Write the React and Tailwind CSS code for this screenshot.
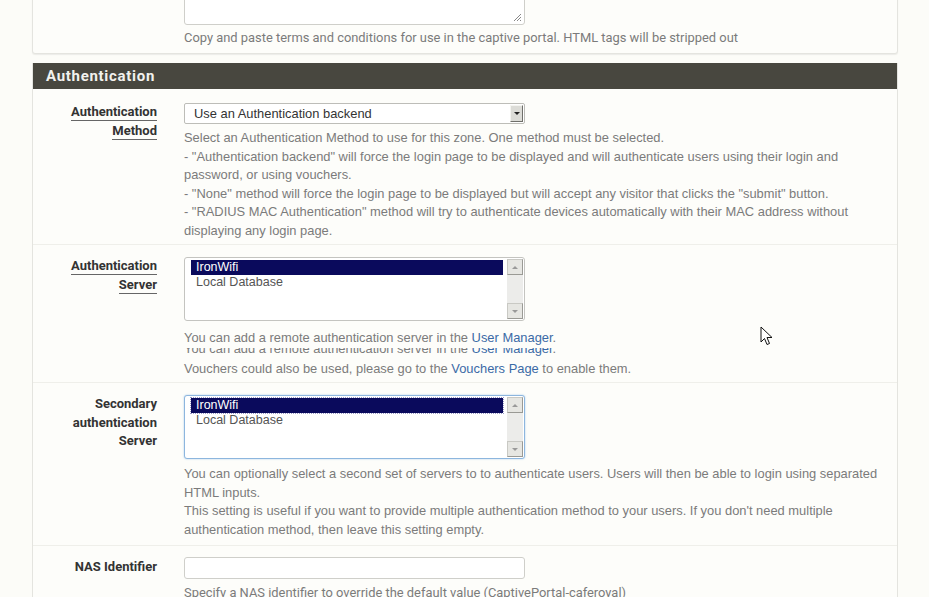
import React from 'react';

const narrow = { fontFamily: '"Liberation Sans Narrow", Roboto, "Liberation Sans", sans-serif' };

function Label({ lines, underline }) {
  return (
    <div className="w-[124px] shrink-0 text-right font-bold text-[13px] leading-[18.5px] text-[#333]" style={narrow}>
      {lines.map((l) => (
        <div key={l}>
          <span className={underline ? 'border-b border-[#666] pb-[1px]' : ''}>{l}</span>
        </div>
      ))}
    </div>
  );
}

function Help({ children, className = '' }) {
  return (
    <div className={'text-[12.9px] leading-[18.5px] text-[#7b7b7b] whitespace-nowrap ' + className}>
      {children}
    </div>
  );
}

function Listbox({ focused }) {
  return (
    <div
      className={
        'w-[341px] h-[64px] bg-white rounded-[3px] border flex ' +
        (focused ? 'border-[#8db6de] shadow-[0_0_2px_#a9cbea]' : 'border-[#c4c4c0]')
      }
    >
      <div className="flex-1 pl-[6px] pt-[2px] text-[12.5px] leading-[15px]">
        <div
          className={
            'bg-[#0a0a5c] text-white pl-[5px] h-[15px] ' +
            (focused ? 'outline outline-1 outline-dotted outline-[#9a9ac8]' : '')
          }
        >
          IronWifi
        </div>
        <div className="text-[#555] pl-[5px]">Local Database</div>
      </div>
      <div className="w-[16px] ml-[4px] mr-[1px] my-[1px] bg-[#ececea] flex flex-col justify-between">
        <div className="h-[16px] bg-[#e6e6e2] border border-[#c9c9c4] border-r-[#9a9a95] border-b-[#9a9a95] flex items-center justify-center">
          <div className="w-0 h-0 border-l-[3px] border-r-[3px] border-b-[3px] border-l-transparent border-r-transparent border-b-[#999]" />
        </div>
        <div className="h-[16px] bg-[#e6e6e2] border border-[#c9c9c4] border-r-[#9a9a95] border-b-[#9a9a95] flex items-center justify-center">
          <div className="w-0 h-0 border-l-[3px] border-r-[3px] border-t-[3px] border-l-transparent border-r-transparent border-t-[#999]" />
        </div>
      </div>
    </div>
  );
}

function Link({ children }) {
  return <span className="text-[#3b6aa6]">{children}</span>;
}

export default function App() {
  return (
    <div
      className="relative w-[929px] h-[597px] overflow-hidden bg-[#fcfcf8]"
      style={{ fontFamily: '"Liberation Sans", Arial, sans-serif' }}
    >
      {/* previous panel, cut off at the top */}
      <div className="ml-[32px] w-[866px] -mt-[30px] bg-[#fdfdfa] border border-[#e4e4df] rounded-b-[3px] shadow-[0_1px_1px_#ecece8]">
        <div className="flex">
          <div className="w-[124px] shrink-0" />
          <div className="ml-[27px] pt-[4px] pb-[6px]">
            <div className="relative w-[341px] h-[50px] bg-white border border-[#cfcfca] rounded-[3px]">
              <svg className="absolute right-[2px] bottom-[2px]" width="10" height="10" viewBox="0 0 10 10">
                <path d="M9 2 L2 9 M9 5 L5 9 M9 8 L8 9" stroke="#888" strokeWidth="1" />
              </svg>
            </div>
            <div className="mt-[4px] text-[12.9px] leading-[18px] text-[#7b7b7b]" style={narrow}>
              Copy and paste terms and conditions for use in the captive portal. HTML tags will be stripped out
            </div>
          </div>
        </div>
      </div>

      {/* Authentication panel */}
      <div className="ml-[32px] w-[866px] mt-[9px] bg-[#fdfdfa] border border-[#e4e4df] border-t-0">
        <div
          className="h-[26px] bg-[#48473f] text-[#f2f2ee] font-bold text-[15px] tracking-[0.7px] pl-[13px] flex items-center"
          style={narrow}
        >
          Authentication
        </div>

        {/* Authentication Method */}
        <div className="flex pt-[14px] pb-[4px] border-b border-[#efefea]">
          <Label lines={['Authentication', 'Method']} underline />
          <div className="ml-[27px]">
            <div className="w-[341px] h-[21px] bg-white border border-[#bdbdb8] rounded-[2px] flex items-center justify-between pl-[9px] pr-[1px]">
              <span className="text-[12.9px] text-[#333]">Use an Authentication backend</span>
              <div className="w-[13px] h-[17px] bg-[#dcdcd7] border border-[#f4f4f0] border-r-[#6f6f6a] border-b-[#6f6f6a] flex items-center justify-center">
                <div className="w-0 h-0 border-l-[3px] border-r-[3px] border-t-[3px] border-l-transparent border-r-transparent border-t-[#222]" />
              </div>
            </div>
            <Help className="mt-[5px]">
              <div>Select an Authentication Method to use for this zone. One method must be selected.</div>
              <div>- "Authentication backend" will force the login page to be displayed and will authenticate users using their login and</div>
              <div>password, or using vouchers.</div>
              <div>- "None" method will force the login page to be displayed but will accept any visitor that clicks the "submit" button.</div>
              <div>- "RADIUS MAC Authentication" method will try to authenticate devices automatically with their MAC address without</div>
              <div>displaying any login page.</div>
            </Help>
          </div>
        </div>

        {/* Authentication Server */}
        <div className="flex pt-[12px] pb-[4px] border-b border-[#efefea]">
          <Label lines={['Authentication', 'Server']} underline />
          <div className="ml-[27px]">
            <Listbox />
            <Help className="mt-[8px]">
              <div>
                You can add a remote authentication server in the <Link>User Manager</Link>.
              </div>
              <div className="h-[12px] overflow-hidden">
                <div className="-mt-[8px]">
                  You can add a remote authentication server in the <Link>User Manager</Link>.
                </div>
              </div>
              <div>
                Vouchers could also be used, please go to the <Link>Vouchers Page</Link> to enable them.
              </div>
            </Help>
          </div>
        </div>

        {/* Secondary authentication Server */}
        <div className="flex pt-[12px] pb-[6px] border-b border-[#efefea]">
          <Label lines={['Secondary', 'authentication', 'Server']} />
          <div className="ml-[27px]">
            <Listbox focused />
            <Help className="mt-[6px]">
              <div>You can optionally select a second set of servers to to authenticate users. Users will then be able to login using separated</div>
              <div>HTML inputs.</div>
              <div>This setting is useful if you want to provide multiple authentication method to your users. If you don't need multiple</div>
              <div>authentication method, then leave this setting empty.</div>
            </Help>
          </div>
        </div>

        {/* NAS Identifier */}
        <div className="flex pt-[11px] pb-[10px]">
          <div className="w-[124px] shrink-0 text-right font-bold text-[13px] leading-[18.5px] text-[#333] pt-[1px]" style={narrow}>
            NAS Identifier
          </div>
          <div className="ml-[27px]">
            <div className="w-[341px] h-[22px] bg-white border border-[#cfcfca] rounded-[3px]" />
            <div className="mt-[5px] text-[12.9px] leading-[18px] text-[#7b7b7b]" style={narrow}>
              Specify a NAS identifier to override the default value (CaptivePortal-caferoyal)
            </div>
          </div>
        </div>
      </div>

      {/* mouse cursor */}
      <svg className="absolute left-[760px] top-[326px]" width="13" height="20" viewBox="0 0 13 20">
        <path d="M1 1 L1 16 L4.5 12.5 L7 18.5 L9.5 17.5 L7 11.5 L12 11.5 Z" fill="#fff" stroke="#111" strokeWidth="1" strokeLinejoin="round" />
      </svg>
    </div>
  );
}
